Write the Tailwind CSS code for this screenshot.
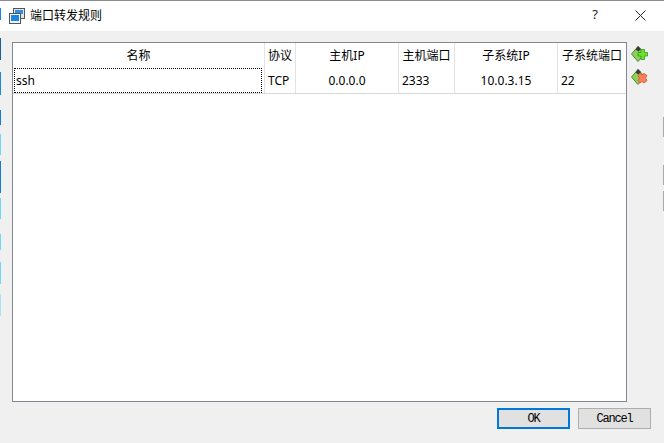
<!DOCTYPE html>
<html lang="zh-CN">
<head>
  <meta charset="UTF-8">
  <title>端口转发规则</title>
  <script src="https://cdn.jsdelivr.net/npm/@tailwindcss/browser@4"></script>
</head>
<body class="bg-[#f0f0f0]">
  <div class="relative w-[664px] h-[443px] overflow-hidden flex flex-col bg-[#f0f0f0] text-[12px] text-black font-['Noto_Sans','Noto_Sans_CJK_SC',sans-serif]">
    <!-- Title bar -->
    <header class="h-[31px] shrink-0 bg-white border-t border-[#8c8c8c] flex items-center pl-[9px]">
      <svg class="w-[16px] h-[16px] -mt-[1px]" viewBox="0 0 16 16">
        <rect x="4.500" y="0.500" width="11" height="10" fill="#dfe6ee" stroke="#555"/>
        <rect x="6" y="2" width="8" height="4" fill="#2f8fe0"/>
        <rect x="0.500" y="5.500" width="11" height="10" fill="#f4f4f4" stroke="#555"/>
        <rect x="2" y="7" width="8" height="6" fill="#1787e6"/>
      </svg>
      <span class="ml-[5px] text-[12px]">端口转发规则</span>
      <span class="ml-auto mr-[37px] -mt-[2px] text-[13px] text-[#222]">?</span>
      <svg class="w-[11px] h-[11px] mr-[18px] -mt-[2px]" viewBox="0 0 11 11" fill="none" stroke="#222" stroke-width="1">
        <path d="M0.500 0.500L10.500 10.500M10.500 0.500L0.500 10.500"/>
      </svg>
    </header>

    <!-- Content -->
    <div class="flex pl-[12px] pt-[11px] gap-[4px]">
      <div class="w-[615px] h-[360px] bg-white border border-[#828790]">
        <div class="grid grid-cols-[251px_31px_103px_56px_103px_69px] h-[24px] items-center text-center">
          <div class="pt-[2px]">名称</div>
          <div class="h-full flex items-center justify-center pt-[2px] border-l border-[#e3e3e3]">协议</div>
          <div class="h-full flex items-center justify-center pt-[2px] border-l border-[#e3e3e3]">主机IP</div>
          <div class="h-full flex items-center justify-center pt-[2px] border-l border-[#e3e3e3]">主机端口</div>
          <div class="h-full flex items-center justify-center pt-[2px] border-l border-[#e3e3e3]">子系统IP</div>
          <div class="h-full flex items-center justify-center pt-[2px] border-l border-[#e3e3e3] whitespace-nowrap">子系统端口</div>
        </div>
        <div class="grid grid-cols-[251px_31px_103px_56px_103px_69px] h-[27px] border-b border-[#d9d9d9]">
          <div class="h-[25px] mt-[1px] ml-[1px] mr-[2px] pl-[1px] pt-[1px] flex items-center border border-dotted border-black">ssh</div>
          <div class="h-full flex items-center pl-[3px] pt-[2px] border-l border-[#e3e3e3]">TCP</div>
          <div class="h-full flex items-center justify-center pt-[2px] border-l border-[#e3e3e3]">0.0.0.0</div>
          <div class="h-full flex items-center pl-[3px] pt-[2px] border-l border-[#e3e3e3]">2333</div>
          <div class="h-full flex items-center justify-center pt-[2px] border-l border-[#e3e3e3]">10.0.3.15</div>
          <div class="h-full flex items-center pl-[3px] pt-[2px] border-l border-[#e3e3e3]">22</div>
        </div>
      </div>
      <div class="flex flex-col gap-[5px] pt-[3px]">
        <svg class="w-[17px] h-[18px]" viewBox="0 0 17 18">
          <path d="M7 1.500L0.500 9L7 16.500L14 9Z" fill="#8fd05a" stroke="#4f8a35"/>
          <path d="M4.500 4.500L7 1L10 4L7.500 6.500Z" fill="#3a3a3a"/>
          <path d="M7 7.500h3V4.500h3.500v3h3V11h-3v3.500H10V11H7Z" fill="#6fe030" stroke="#2f9a17" stroke-width="0.800"/>
        </svg>
        <svg class="w-[17px] h-[18px]" viewBox="0 0 17 18">
          <path d="M7 1.500L0.500 9L7 16.500L14 9Z" fill="#8fd05a" stroke="#4f8a35"/>
          <path d="M4.500 4.500L7 1L10 4L7.500 6.500Z" fill="#3a3a3a"/>
          <path d="M7 7.500L9 5.500l2 1.500 2-1.500 3 2-1.500 2.500 1.500 2.500-3 2.500-2-1.500-2 1.500-2-2.500 1.500-2.500Z" fill="#f8805a" stroke="#d0502f" stroke-width="0.800"/>
        </svg>
      </div>
    </div>

    <!-- Buttons -->
    <div class="flex justify-end gap-[8px] pt-[6px] pr-[13px] font-['Liberation_Mono','Noto_Sans_CJK_SC',monospace] tracking-[-1.2px]">
      <button class="w-[73px] h-[21px] bg-[#e1e1e1] border-2 border-[#0078d7] leading-none">OK</button>
      <button class="w-[73px] h-[21px] bg-[#e1e1e1] border border-[#adadad] leading-none">Cancel</button>
    </div>

    <!-- Slivers of the window behind -->
    <div class="absolute left-0 top-[8px] w-[1px] h-[12px] bg-[#1787e6]"></div>
    <div class="absolute left-0 top-[38px] w-[1px] h-[22px] bg-[#1a5f9e]"></div>
    <div class="absolute left-0 top-[72px] w-[1px] h-[23px] bg-[#1787e6]"></div>
    <div class="absolute left-0 top-[110px] w-[1px] h-[15px] bg-[#0f7be0]"></div>
    <div class="absolute left-0 top-[134px] w-[1px] h-[21px] bg-[#6fd8f5]"></div>
    <div class="absolute left-0 top-[161px] w-[1px] h-[32px] bg-[#0f7be0]"></div>
    <div class="absolute left-0 top-[198px] w-[1px] h-[21px] bg-[#6fd8f5]"></div>
    <div class="absolute left-0 top-[234px] w-[1px] h-[16px] bg-[#6fd8f5]"></div>
    <div class="absolute left-0 top-[262px] w-[1px] h-[22px] bg-[#6fd8f5]"></div>
    <div class="absolute left-0 top-[294px] w-[1px] h-[22px] bg-[#a5e4f5]"></div>
    <div class="absolute right-0 top-[117px] w-[1px] h-[20px] bg-[#a8a8a8]"></div>
    <div class="absolute right-0 top-[165px] w-[1px] h-[20px] bg-[#a8a8a8]"></div>
    <div class="absolute right-0 top-[191px] w-[1px] h-[20px] bg-[#a8a8a8]"></div>
  </div>
</body>
</html>
